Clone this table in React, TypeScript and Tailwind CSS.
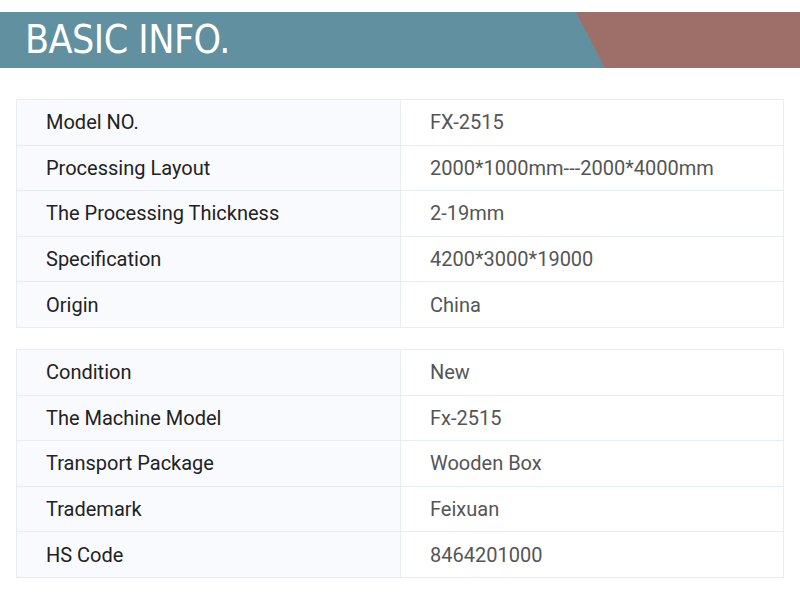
import React from "react";

const groups = [
  [
    ["Model NO.", "FX-2515"],
    ["Processing Layout", "2000*1000mm---2000*4000mm"],
    ["The Processing Thickness", "2-19mm"],
    ["Specification", "4200*3000*19000"],
    ["Origin", "China"],
  ],
  [
    ["Condition", "New"],
    ["The Machine Model", "Fx-2515"],
    ["Transport Package", "Wooden Box"],
    ["Trademark", "Feixuan"],
    ["HS Code", "8464201000"],
  ],
];

export default function App(): JSX.Element {
  return (
    <div className="w-[800px] h-[599px] bg-white pt-3 font-['Roboto',sans-serif]">
      <header className="relative h-14 bg-[#6190a0] overflow-hidden">
        <div className="absolute inset-y-0 right-0 w-[224px] bg-[#9e6f68] [clip-path:polygon(0_0,100%_0,100%_100%,29px_100%)]" />
        <h1 className="relative pl-[25px] pt-[5px] text-[39px] leading-[46px] text-white font-['Liberation_Sans_Narrow','DejaVu_Sans_Condensed',sans-serif] tracking-[-0.5px]">
          BASIC INFO.
        </h1>
      </header>

      <div className="mt-[31px] flex flex-col gap-[21px] px-4">
        {groups.map((rows, g) => (
          <table key={g} className="w-full border-collapse border border-[#e8edf2] table-fixed">
            <tbody>
              {rows.map(([label, value]) => (
                <tr key={label} className="h-[45.6px] border-b border-[#e8edf2] last:border-b-0">
                  <td className="w-[384px] bg-[#f8fafd] border-r border-[#e8edf2] pl-[29px] text-[20px] text-[#222]">
                    {label}
                  </td>
                  <td className="pl-[29px] text-[20px] text-[#555]">{value}</td>
                </tr>
              ))}
            </tbody>
          </table>
        ))}
      </div>
    </div>
  );
}
